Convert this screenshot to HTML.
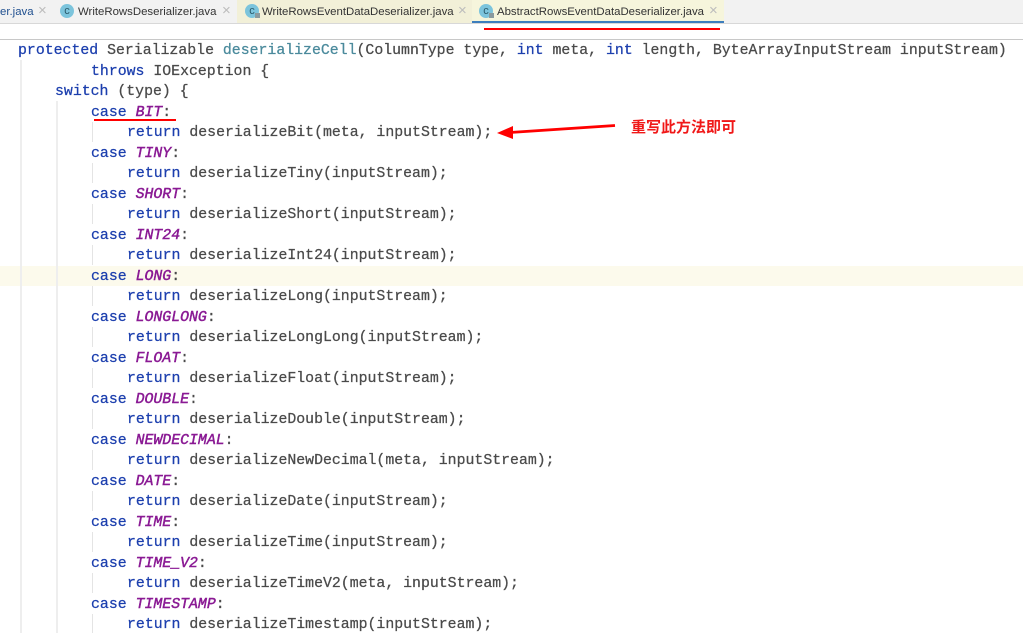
<!DOCTYPE html>
<html><head><meta charset="utf-8">
<style>
html,body{margin:0;padding:0;background:#fff;}
#r{position:relative;width:1023px;height:633px;overflow:hidden;background:#fff;}
.a{position:absolute;}
#p{position:absolute;left:18px;top:41px;width:1005px;margin:0;font:14.85px/20.5px "Liberation Mono",monospace;color:#4a4a4a;-webkit-text-stroke:.25px;white-space:normal;}
#p div{height:20.5px;white-space:pre;}
.l1{padding-left:73px;}
.l2{padding-left:37px;}
.l3{padding-left:73px;}
.l4{padding-left:109px;}
b{font-weight:normal;color:#1c3fae;}
i{color:#8a1a94;font-weight:normal;-webkit-text-stroke:.45px;}
u{text-decoration:none;color:#4a8a9c;}
.t{position:absolute;top:4px;font:11.4px/16px "Liberation Sans",sans-serif;color:#333;white-space:nowrap;}
.x{position:absolute;top:3px;font:15px/16px "Liberation Sans",sans-serif;color:#bcbcbc;}
.c{position:absolute;top:4px;width:14px;height:14px;border-radius:50%;background:#7cc4dc;color:#2a5a6a;font:11px/14px "Liberation Sans",sans-serif;text-align:center;}
.k{position:absolute;left:10px;top:9px;width:5px;height:5px;background:#8a9a9e;}
</style></head><body><div id="r">
<div class="a" style="left:0;top:0;width:1023px;height:23px;background:#f2f2f2;"></div>
<div class="a" style="left:237px;top:0;width:235px;height:23px;background:#f2f0d8;"></div>
<div class="a" style="left:472px;top:0;width:252px;height:21px;background:#f6f5dc;"></div>
<div class="a" style="left:472px;top:21px;width:252px;height:2px;background:#3d7ebd;"></div>
<div class="a" style="left:0;top:23px;width:1023px;height:1px;background:#d8d8d8;"></div>
<div class="a" style="left:0;top:39px;width:1023px;height:1px;background:#c8c8c8;"></div>
<div class="a" style="left:484px;top:28px;width:236px;height:2px;background:#f00;"></div>
<div class="t" style="left:0;color:#1f4f8f;">er.java</div><div class="x" style="left:38px;">×</div>
<div class="c" style="left:60px;">c</div><div class="t" style="left:78px;">WriteRowsDeserializer.java</div><div class="x" style="left:222px;">×</div>
<div class="c" style="left:245px;">c<span class="k"></span></div><div class="t" style="left:262px;">WriteRowsEventDataDeserializer.java</div><div class="x" style="left:458px;">×</div>
<div class="c" style="left:479px;">c<span class="k"></span></div><div class="t" style="left:497px;">AbstractRowsEventDataDeserializer.java</div><div class="x" style="left:709px;">×</div>

<div class="a" style="left:0;top:266px;width:1023px;height:20px;background:#fcfaec;"></div>
<div class="a" style="left:20px;top:60px;width:2px;height:573px;background:#eeeeee;"></div>
<div class="a" style="left:56px;top:101px;width:2px;height:532px;background:#eeeeee;"></div>
<div class="a" style="left:92px;top:122px;width:1px;height:20px;background:#e4e4e4;"></div>
<div class="a" style="left:92px;top:163px;width:1px;height:20px;background:#e4e4e4;"></div>
<div class="a" style="left:92px;top:204px;width:1px;height:20px;background:#e4e4e4;"></div>
<div class="a" style="left:92px;top:245px;width:1px;height:20px;background:#e4e4e4;"></div>
<div class="a" style="left:92px;top:286px;width:1px;height:20px;background:#e4e4e4;"></div>
<div class="a" style="left:92px;top:327px;width:1px;height:20px;background:#e4e4e4;"></div>
<div class="a" style="left:92px;top:368px;width:1px;height:20px;background:#e4e4e4;"></div>
<div class="a" style="left:92px;top:409px;width:1px;height:20px;background:#e4e4e4;"></div>
<div class="a" style="left:92px;top:450px;width:1px;height:20px;background:#e4e4e4;"></div>
<div class="a" style="left:92px;top:491px;width:1px;height:20px;background:#e4e4e4;"></div>
<div class="a" style="left:92px;top:532px;width:1px;height:20px;background:#e4e4e4;"></div>
<div class="a" style="left:92px;top:573px;width:1px;height:20px;background:#e4e4e4;"></div>
<div class="a" style="left:92px;top:614px;width:1px;height:19px;background:#e4e4e4;"></div>

<div id="p"><div><b>protected</b> Serializable <u>deserializeCell</u>(ColumnType type, <b>int</b> meta, <b>int</b> length, ByteArrayInputStream inputStream)</div><div class="l1"><b>throws</b> IOException {</div><div class="l2"><b>switch</b> (type) {</div><div class="l3"><b>case</b> <i>BIT</i>:</div><div class="l4"><b>return</b> deserializeBit(meta, inputStream);</div><div class="l3"><b>case</b> <i>TINY</i>:</div><div class="l4"><b>return</b> deserializeTiny(inputStream);</div><div class="l3"><b>case</b> <i>SHORT</i>:</div><div class="l4"><b>return</b> deserializeShort(inputStream);</div><div class="l3"><b>case</b> <i>INT24</i>:</div><div class="l4"><b>return</b> deserializeInt24(inputStream);</div><div class="l3"><b>case</b> <i>LONG</i>:</div><div class="l4"><b>return</b> deserializeLong(inputStream);</div><div class="l3"><b>case</b> <i>LONGLONG</i>:</div><div class="l4"><b>return</b> deserializeLongLong(inputStream);</div><div class="l3"><b>case</b> <i>FLOAT</i>:</div><div class="l4"><b>return</b> deserializeFloat(inputStream);</div><div class="l3"><b>case</b> <i>DOUBLE</i>:</div><div class="l4"><b>return</b> deserializeDouble(inputStream);</div><div class="l3"><b>case</b> <i>NEWDECIMAL</i>:</div><div class="l4"><b>return</b> deserializeNewDecimal(meta, inputStream);</div><div class="l3"><b>case</b> <i>DATE</i>:</div><div class="l4"><b>return</b> deserializeDate(inputStream);</div><div class="l3"><b>case</b> <i>TIME</i>:</div><div class="l4"><b>return</b> deserializeTime(inputStream);</div><div class="l3"><b>case</b> <i>TIME_V2</i>:</div><div class="l4"><b>return</b> deserializeTimeV2(meta, inputStream);</div><div class="l3"><b>case</b> <i>TIMESTAMP</i>:</div><div class="l4"><b>return</b> deserializeTimestamp(inputStream);</div></div>

<div class="a" style="left:94px;top:119px;width:82px;height:2px;background:#f00;"></div>
<svg class="a" style="left:490px;top:118px" width="135" height="26" viewBox="0 0 135 26">
<path d="M20 14.5 L125 7.5" stroke="#f00" stroke-width="2.8" fill="none"/>
<path d="M7 15 L23 8 L23 21 Z" fill="#f00"/>
</svg>
<div class="a" style="left:631px;top:119px;font:bold 15px/18px 'Liberation Sans','Noto Sans CJK SC',sans-serif;color:#f01818;white-space:nowrap;">重写此方法即可</div>
</div></body></html>
